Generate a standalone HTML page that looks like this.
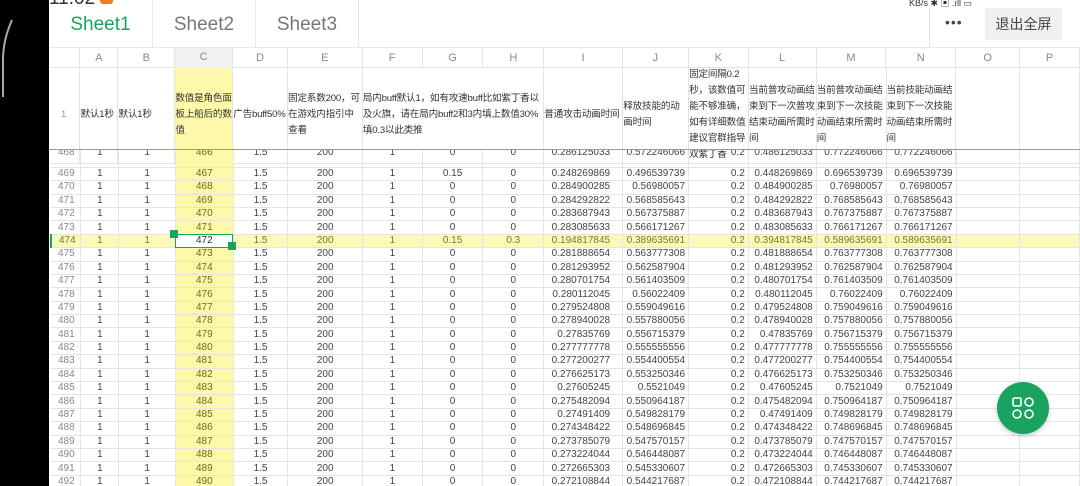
<!DOCTYPE html>
<html><head><meta charset="utf-8"><style>
*{margin:0;padding:0;box-sizing:border-box}
body{width:1080px;height:486px;overflow:hidden;background:#000;font-family:"Liberation Sans","Noto Sans CJK SC",sans-serif;position:relative}
#main{position:absolute;left:49px;top:0;width:1031px;height:486px;background:#fff;overflow:hidden}
.tab{position:absolute;top:0;height:47px;line-height:50px;font-size:19px;color:#777;text-align:center;border-right:1px solid #e8e8e8}
table{border-collapse:collapse;table-layout:fixed;position:absolute;left:1px}
td{border-right:1px solid #e4e4e4;border-bottom:1px solid #e4e4e4;font-size:10px;color:#444;text-align:center;white-space:nowrap;overflow:hidden;padding:0}
#hdr td{height:20px;color:#888;font-size:11px;border-top:1px solid #e8e8e8}
#r1 td{height:83px;white-space:normal;text-align:left;font-size:9.6px;line-height:16px;color:#333;vertical-align:middle;padding:0;overflow:visible;word-break:break-all;letter-spacing:-0.2px}
#data td{height:13.4px;line-height:12px}
td.rh{color:#888;text-align:left;padding-left:7px}
td.c{background:#fef9a8;color:#6b6b20}
td.r{text-align:right;padding-right:3px}
td.ri{text-align:right;padding-right:12px}
tr.hl td{background:#fdf9b9;color:#7a7a20}
</style></head><body>
<svg style="position:absolute;left:0;top:0" width="49" height="110"><path d="M12 20 Q3 40 3 60 L3 97" stroke="#aaa" stroke-width="2" fill="none"/></svg>
<div id="main">
<div style="position:absolute;left:0;top:-12px;font-size:19px;color:#333">11:02 <span style="display:inline-block;width:13px;height:13px;background:#f57c1a;border-radius:3px"></span></div>
<div class="tab" style="left:0;width:104px;color:#1aa260">Sheet1</div>
<div class="tab" style="left:104px;width:103px">Sheet2</div>
<div class="tab" style="left:207px;width:103px">Sheet3</div>
<div style="position:absolute;left:860px;top:-1px;font-size:9px;color:#333;line-height:9px">KB/s ✱ ▣ .ıll ▭</div>
<div style="position:absolute;left:880px;top:8px;width:1px;height:40px;background:#e0e0e0"></div>
<div style="position:absolute;left:896px;top:14px;font-size:14px;color:#444;letter-spacing:1px">•••</div>
<div style="position:absolute;left:936px;top:8px;width:77px;height:32px;background:#f0f0f0;font-size:14px;line-height:32px;text-align:center;color:#444">退出全屏</div>

<table id="hdr" style="top:47px"><colgroup><col style="width:30px"><col style="width:38px"><col style="width:57px"><col style="width:58px"><col style="width:55px"><col style="width:75px"><col style="width:60px"><col style="width:61px"><col style="width:61px"><col style="width:79px"><col style="width:66px"><col style="width:60px"><col style="width:68px"><col style="width:70px"><col style="width:70px"><col style="width:64px"><col style="width:60px"></colgroup>
<tr><td></td><td>A</td><td>B</td><td style="background:#f0f1f2;border-bottom:2px solid #1aa260">C</td><td>D</td><td>E</td><td>F</td><td>G</td><td>H</td><td>I</td><td>J</td><td>K</td><td>L</td><td>M</td><td>N</td><td>O</td><td>P</td></tr></table>

<table id="r1" style="top:67px"><colgroup><col style="width:30px"><col style="width:38px"><col style="width:57px"><col style="width:58px"><col style="width:55px"><col style="width:75px"><col style="width:60px"><col style="width:61px"><col style="width:61px"><col style="width:79px"><col style="width:66px"><col style="width:60px"><col style="width:68px"><col style="width:70px"><col style="width:70px"><col style="width:64px"><col style="width:60px"></colgroup>
<tr><td class="rh" style="color:#999;padding-left:11px">1</td><td style="white-space:nowrap">默认1秒</td><td style="white-space:nowrap">默认1秒</td><td class="c">数值是角色面板上船后的数值</td><td>广告buff50%</td><td>固定系数200，可在游戏内指引中查看</td><td colspan="3" style="vertical-align:middle">局内buff默认1，如有攻速buff比如紫丁香以及火旗，请在局内buff2和3内填上数值30%填0.3以此类推</td><td style="white-space:nowrap">普通攻击动画时间</td><td>释放技能的动画时间</td><td>固定间隔0.2秒，该数值可能不够准确，如有详细数值建议官群指导双紫丁香</td><td>当前普攻动画结束到下一次普攻结束动画所需时间</td><td>当前普攻动画结束到下一次技能动画结束所需时间</td><td>当前技能动画结束到下一次技能动画结束所需时间</td><td></td><td></td></tr></table>

<div style="position:absolute;left:0;top:150px;width:1031px;height:336px;overflow:hidden">
<table id="data" style="top:-3px"><colgroup><col style="width:30px"><col style="width:38px"><col style="width:57px"><col style="width:58px"><col style="width:55px"><col style="width:75px"><col style="width:60px"><col style="width:61px"><col style="width:61px"><col style="width:79px"><col style="width:66px"><col style="width:60px"><col style="width:68px"><col style="width:70px"><col style="width:70px"><col style="width:64px"><col style="width:60px"></colgroup>
<tr style="height:20.3px"><td class="rh" style="height:20.3px;vertical-align:top;padding-top:0">468</td><td style="vertical-align:top">1</td><td style="vertical-align:top">1</td><td class="c" style="vertical-align:top">466</td><td style="vertical-align:top">1.5</td><td style="vertical-align:top">200</td><td style="vertical-align:top">1</td><td style="vertical-align:top">0</td><td style="vertical-align:top">0</td><td class="ri" style="vertical-align:top">0.286125033</td><td class="r" style="vertical-align:top">0.572246066</td><td class="r" style="vertical-align:top">0.2</td><td class="r" style="vertical-align:top">0.486125033</td><td class="r" style="vertical-align:top">0.772246066</td><td class="r" style="vertical-align:top">0.772246066</td><td></td><td></td></tr>
<tr><td class="rh">469</td><td>1</td><td>1</td><td class="c">467</td><td>1.5</td><td>200</td><td>1</td><td>0.15</td><td>0</td><td class="ri">0.248269869</td><td class="r">0.496539739</td><td class="r">0.2</td><td class="r">0.448269869</td><td class="r">0.696539739</td><td class="r">0.696539739</td><td></td><td></td></tr>
<tr><td class="rh">470</td><td>1</td><td>1</td><td class="c">468</td><td>1.5</td><td>200</td><td>1</td><td>0</td><td>0</td><td class="ri">0.284900285</td><td class="r">0.56980057</td><td class="r">0.2</td><td class="r">0.484900285</td><td class="r">0.76980057</td><td class="r">0.76980057</td><td></td><td></td></tr>
<tr><td class="rh">471</td><td>1</td><td>1</td><td class="c">469</td><td>1.5</td><td>200</td><td>1</td><td>0</td><td>0</td><td class="ri">0.284292822</td><td class="r">0.568585643</td><td class="r">0.2</td><td class="r">0.484292822</td><td class="r">0.768585643</td><td class="r">0.768585643</td><td></td><td></td></tr>
<tr><td class="rh">472</td><td>1</td><td>1</td><td class="c">470</td><td>1.5</td><td>200</td><td>1</td><td>0</td><td>0</td><td class="ri">0.283687943</td><td class="r">0.567375887</td><td class="r">0.2</td><td class="r">0.483687943</td><td class="r">0.767375887</td><td class="r">0.767375887</td><td></td><td></td></tr>
<tr><td class="rh">473</td><td>1</td><td>1</td><td class="c">471</td><td>1.5</td><td>200</td><td>1</td><td>0</td><td>0</td><td class="ri">0.283085633</td><td class="r">0.566171267</td><td class="r">0.2</td><td class="r">0.483085633</td><td class="r">0.766171267</td><td class="r">0.766171267</td><td></td><td></td></tr>
<tr class="hl"><td class="rh" style="border-left:2px solid #1aa260">474</td><td>1</td><td>1</td><td style="background:#fff;color:#333;outline:1px solid #1aa260;outline-offset:-1px">472</td><td>1.5</td><td>200</td><td>1</td><td>0.15</td><td>0.3</td><td class="ri">0.194817845</td><td class="r">0.389635691</td><td class="r">0.2</td><td class="r">0.394817845</td><td class="r">0.589635691</td><td class="r">0.589635691</td><td></td><td></td></tr>
<tr><td class="rh">475</td><td>1</td><td>1</td><td class="c">473</td><td>1.5</td><td>200</td><td>1</td><td>0</td><td>0</td><td class="ri">0.281888654</td><td class="r">0.563777308</td><td class="r">0.2</td><td class="r">0.481888654</td><td class="r">0.763777308</td><td class="r">0.763777308</td><td></td><td></td></tr>
<tr><td class="rh">476</td><td>1</td><td>1</td><td class="c">474</td><td>1.5</td><td>200</td><td>1</td><td>0</td><td>0</td><td class="ri">0.281293952</td><td class="r">0.562587904</td><td class="r">0.2</td><td class="r">0.481293952</td><td class="r">0.762587904</td><td class="r">0.762587904</td><td></td><td></td></tr>
<tr><td class="rh">477</td><td>1</td><td>1</td><td class="c">475</td><td>1.5</td><td>200</td><td>1</td><td>0</td><td>0</td><td class="ri">0.280701754</td><td class="r">0.561403509</td><td class="r">0.2</td><td class="r">0.480701754</td><td class="r">0.761403509</td><td class="r">0.761403509</td><td></td><td></td></tr>
<tr><td class="rh">478</td><td>1</td><td>1</td><td class="c">476</td><td>1.5</td><td>200</td><td>1</td><td>0</td><td>0</td><td class="ri">0.280112045</td><td class="r">0.56022409</td><td class="r">0.2</td><td class="r">0.480112045</td><td class="r">0.76022409</td><td class="r">0.76022409</td><td></td><td></td></tr>
<tr><td class="rh">479</td><td>1</td><td>1</td><td class="c">477</td><td>1.5</td><td>200</td><td>1</td><td>0</td><td>0</td><td class="ri">0.279524808</td><td class="r">0.559049616</td><td class="r">0.2</td><td class="r">0.479524808</td><td class="r">0.759049616</td><td class="r">0.759049616</td><td></td><td></td></tr>
<tr><td class="rh">480</td><td>1</td><td>1</td><td class="c">478</td><td>1.5</td><td>200</td><td>1</td><td>0</td><td>0</td><td class="ri">0.278940028</td><td class="r">0.557880056</td><td class="r">0.2</td><td class="r">0.478940028</td><td class="r">0.757880056</td><td class="r">0.757880056</td><td></td><td></td></tr>
<tr><td class="rh">481</td><td>1</td><td>1</td><td class="c">479</td><td>1.5</td><td>200</td><td>1</td><td>0</td><td>0</td><td class="ri">0.27835769</td><td class="r">0.556715379</td><td class="r">0.2</td><td class="r">0.47835769</td><td class="r">0.756715379</td><td class="r">0.756715379</td><td></td><td></td></tr>
<tr><td class="rh">482</td><td>1</td><td>1</td><td class="c">480</td><td>1.5</td><td>200</td><td>1</td><td>0</td><td>0</td><td class="ri">0.277777778</td><td class="r">0.555555556</td><td class="r">0.2</td><td class="r">0.477777778</td><td class="r">0.755555556</td><td class="r">0.755555556</td><td></td><td></td></tr>
<tr><td class="rh">483</td><td>1</td><td>1</td><td class="c">481</td><td>1.5</td><td>200</td><td>1</td><td>0</td><td>0</td><td class="ri">0.277200277</td><td class="r">0.554400554</td><td class="r">0.2</td><td class="r">0.477200277</td><td class="r">0.754400554</td><td class="r">0.754400554</td><td></td><td></td></tr>
<tr><td class="rh">484</td><td>1</td><td>1</td><td class="c">482</td><td>1.5</td><td>200</td><td>1</td><td>0</td><td>0</td><td class="ri">0.276625173</td><td class="r">0.553250346</td><td class="r">0.2</td><td class="r">0.476625173</td><td class="r">0.753250346</td><td class="r">0.753250346</td><td></td><td></td></tr>
<tr><td class="rh">485</td><td>1</td><td>1</td><td class="c">483</td><td>1.5</td><td>200</td><td>1</td><td>0</td><td>0</td><td class="ri">0.27605245</td><td class="r">0.5521049</td><td class="r">0.2</td><td class="r">0.47605245</td><td class="r">0.7521049</td><td class="r">0.7521049</td><td></td><td></td></tr>
<tr><td class="rh">486</td><td>1</td><td>1</td><td class="c">484</td><td>1.5</td><td>200</td><td>1</td><td>0</td><td>0</td><td class="ri">0.275482094</td><td class="r">0.550964187</td><td class="r">0.2</td><td class="r">0.475482094</td><td class="r">0.750964187</td><td class="r">0.750964187</td><td></td><td></td></tr>
<tr><td class="rh">487</td><td>1</td><td>1</td><td class="c">485</td><td>1.5</td><td>200</td><td>1</td><td>0</td><td>0</td><td class="ri">0.27491409</td><td class="r">0.549828179</td><td class="r">0.2</td><td class="r">0.47491409</td><td class="r">0.749828179</td><td class="r">0.749828179</td><td></td><td></td></tr>
<tr><td class="rh">488</td><td>1</td><td>1</td><td class="c">486</td><td>1.5</td><td>200</td><td>1</td><td>0</td><td>0</td><td class="ri">0.274348422</td><td class="r">0.548696845</td><td class="r">0.2</td><td class="r">0.474348422</td><td class="r">0.748696845</td><td class="r">0.748696845</td><td></td><td></td></tr>
<tr><td class="rh">489</td><td>1</td><td>1</td><td class="c">487</td><td>1.5</td><td>200</td><td>1</td><td>0</td><td>0</td><td class="ri">0.273785079</td><td class="r">0.547570157</td><td class="r">0.2</td><td class="r">0.473785079</td><td class="r">0.747570157</td><td class="r">0.747570157</td><td></td><td></td></tr>
<tr><td class="rh">490</td><td>1</td><td>1</td><td class="c">488</td><td>1.5</td><td>200</td><td>1</td><td>0</td><td>0</td><td class="ri">0.273224044</td><td class="r">0.546448087</td><td class="r">0.2</td><td class="r">0.473224044</td><td class="r">0.746448087</td><td class="r">0.746448087</td><td></td><td></td></tr>
<tr><td class="rh">491</td><td>1</td><td>1</td><td class="c">489</td><td>1.5</td><td>200</td><td>1</td><td>0</td><td>0</td><td class="ri">0.272665303</td><td class="r">0.545330607</td><td class="r">0.2</td><td class="r">0.472665303</td><td class="r">0.745330607</td><td class="r">0.745330607</td><td></td><td></td></tr>
<tr><td class="rh">492</td><td>1</td><td>1</td><td class="c">490</td><td>1.5</td><td>200</td><td>1</td><td>0</td><td>0</td><td class="ri">0.272108844</td><td class="r">0.544217687</td><td class="r">0.2</td><td class="r">0.472108844</td><td class="r">0.744217687</td><td class="r">0.744217687</td><td></td><td></td></tr>
</table></div>
<div style="position:absolute;left:0;top:149px;width:1031px;height:1px;background:#5cbf90"></div>
<div style="position:absolute;left:121px;top:230px;width:8px;height:8px;background:#1aa260"></div>
<div style="position:absolute;left:179px;top:242px;width:8px;height:8px;background:#1aa260"></div>
<div style="position:absolute;left:948px;top:382px;width:52px;height:52px;border-radius:50%;background:#1aa260;box-shadow:0 2px 5px rgba(0,0,0,.2)">
<svg width="52" height="52" viewBox="0 0 52 52"><g fill="none" stroke="#fff" stroke-width="1.6"><rect x="16" y="16" width="8" height="8" rx="1.5"/><rect x="28" y="16" width="8" height="8" rx="4"/><rect x="16" y="28" width="8" height="8" rx="4"/><rect x="28" y="28" width="8" height="8" rx="4"/></g></svg></div>
</div>
</body></html>
